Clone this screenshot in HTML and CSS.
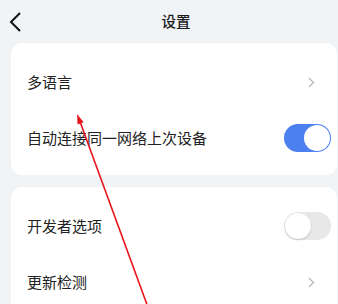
FILE: index.html
```html
<!DOCTYPE html>
<html lang="zh-CN">
<head>
<meta charset="utf-8">
<link rel="stylesheet" href="styles.css">
</head>
<body>
<div class="page">
  <header class="topbar">
    <svg class="back" width="14" height="22" viewBox="0 0 14 22"><polyline points="11,2 2,11 11,20" fill="none" stroke="#111" stroke-width="2"/></svg>
    <div class="title">设置</div>
  </header>
  <section class="card">
    <div class="row"><span class="label">多语言</span><svg class="chev" width="7" height="11" viewBox="0 0 7 11"><polyline points="1,1 5.5,5.5 1,10" fill="none" stroke="#b5b5b5" stroke-width="1.2"/></svg></div>
    <div class="row"><span class="label">自动连接同一网络上次设备</span><span class="switch on"><span class="knob"></span></span></div>
  </section>
  <section class="card">
    <div class="row"><span class="label">开发者选项</span><span class="switch off"><span class="knob"></span></span></div>
    <div class="row"><span class="label">更新检测</span><svg class="chev" width="7" height="11" viewBox="0 0 7 11"><polyline points="1,1 5.5,5.5 1,10" fill="none" stroke="#b5b5b5" stroke-width="1.2"/></svg></div>
  </section>
  <svg class="arrow" width="338" height="304" viewBox="0 0 338 304">
    <line x1="80.5" y1="123" x2="149" y2="310" stroke="#e8141b" stroke-width="1.6"/>
    <polygon points="77,114 83.6,122.3 77.6,124.6" fill="#e8141b"/>
  </svg>
</div>
</body>
</html>
```
FILE: styles.css
```css
html, body {
  margin: 0;
  padding: 0;
}
body {
  background: #f1f4f7;
  font-family: "Noto Sans CJK SC", "Noto Sans", sans-serif;
  color: #222;
}
.page {
  position: relative;
  width: 338px;
  height: 304px;
  overflow: hidden;
  display: flex;
  flex-direction: column;
}
.topbar {
  height: 43px;
  flex-shrink: 0;
  position: relative;
  display: flex;
  align-items: center;
  justify-content: center;
}
.back {
  position: absolute;
  left: 9px;
  top: 11px;
}
.title {
  font-size: 14.5px;
  font-weight: 500;
  margin-top: -2px;
  padding-left: 14px;
  color: #1a1a1a;
}
.card {
  flex-shrink: 0;
  background: #fff;
  margin: 0 1px 12px 11px;
  border-radius: 11px;
  padding: 11px 6px 9px 16px;
  display: flex;
  flex-direction: column;
}
.row {
  height: 56px;
  display: flex;
  align-items: center;
  justify-content: space-between;
}
.label {
  font-size: 15px;
  line-height: 20px;
}
.chev {
  margin-right: 16px;
}
.switch {
  width: 47px;
  height: 28px;
  border-radius: 14px;
  position: relative;
  box-sizing: border-box;
}
.switch.on {
  background: #4c80ef;
}
.switch.off {
  background: #e8e8e8;
}
.knob {
  position: absolute;
  top: 1px;
  width: 26px;
  height: 26px;
  border-radius: 50%;
  background: #fff;
  box-sizing: border-box;
}
.switch.on .knob {
  right: 1px;
}
.switch.off .knob {
  left: 1px;
  box-shadow: 0 1px 2px rgba(0,0,0,0.18);
}
.arrow {
  position: absolute;
  left: 0;
  top: 0;
  pointer-events: none;
}
```
